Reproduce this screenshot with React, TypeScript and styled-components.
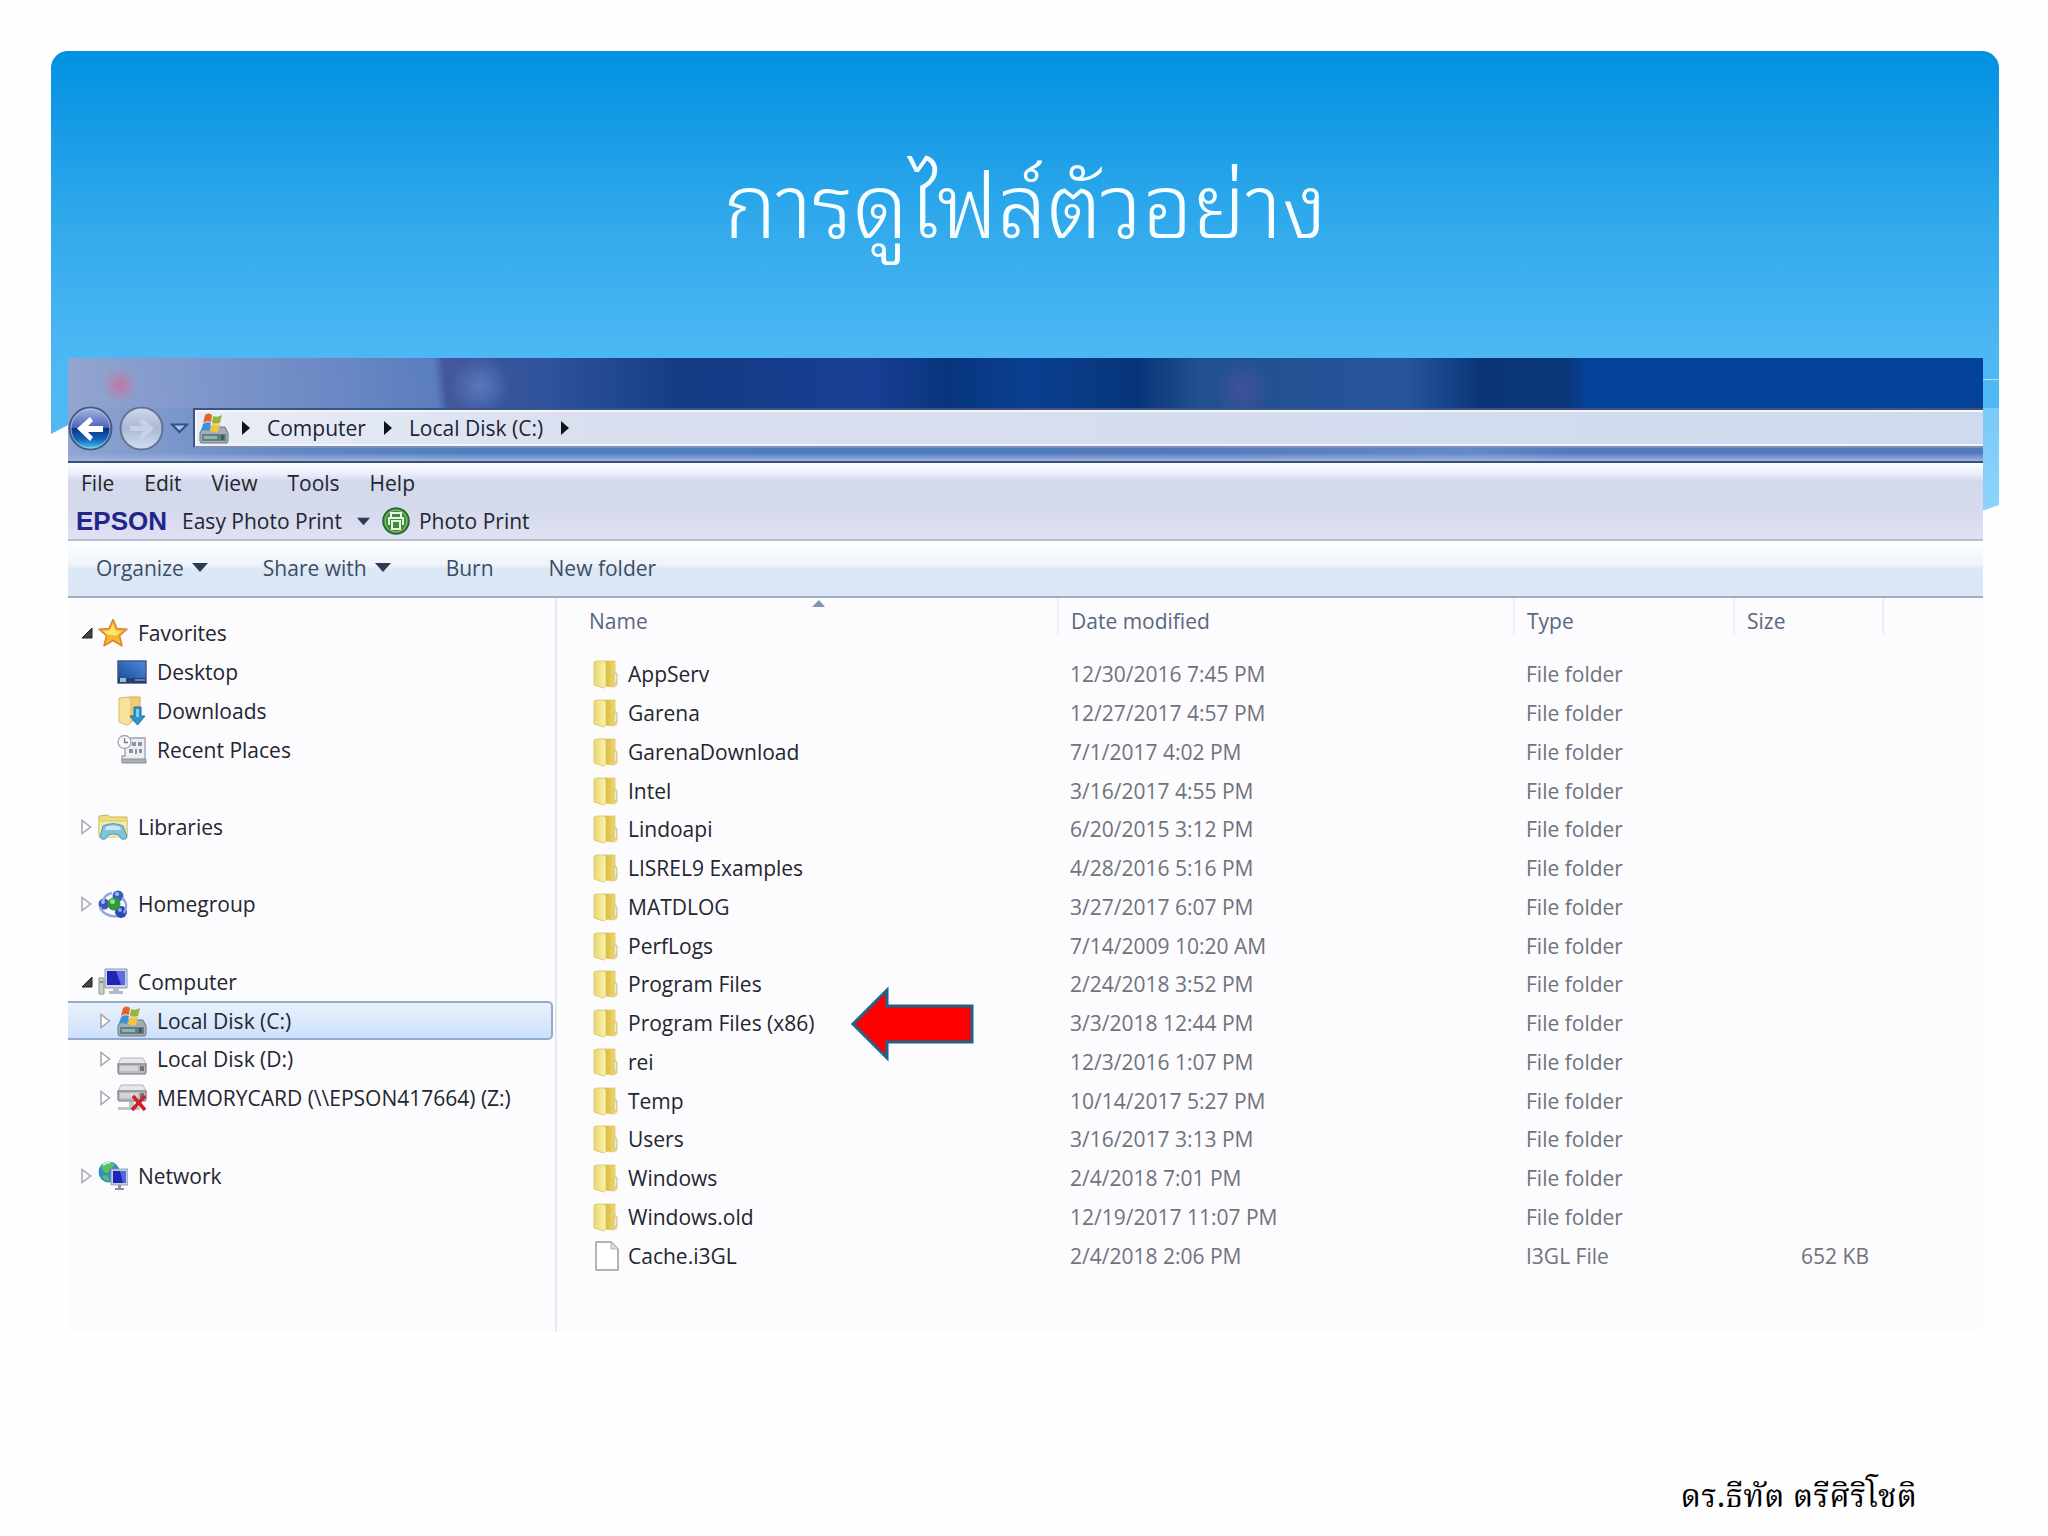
import React from "react";
import styled, { createGlobalStyle, css } from "styled-components";

const UI = `"Open Sans", "Noto Sans", sans-serif`;

const Page = createGlobalStyle`
  *, *::before, *::after { box-sizing: border-box; }
  body { margin: 0; background: #fefefe; }
  button { border: 0; padding: 0; margin: 0; background: none; font: inherit; color: inherit; cursor: pointer; }
  a { color: inherit; text-decoration: none; }
  ul, ol { list-style: none; margin: 0; padding: 0; }
  svg { display: block; flex: none; }
`;

/* ---------- slide ---------- */

const Slide = styled.main`
  display: grid;
  grid-template-columns: minmax(0, 1fr);
  grid-template-rows: 307px auto auto;
  align-content: start;
  min-height: 100vh;
  padding: 51px 49px 0 51px;
  font: 21px/28px ${UI};
  color: #23262e;
`;

const Backdrop = styled.div`
  grid-area: 1 / 1 / 3 / 2;
  z-index: 0;
  height: 460px;
  border-radius: 17px 17px 0 0;
  background:
    linear-gradient(#7ac9f8, #8dd4fc) right 357px / 18px 103px no-repeat,
    linear-gradient(#b4e2fb, #b4e2fb) right 328px / 17px 1px no-repeat,
    linear-gradient(#0092e2, #189be6 80px, #2ea8eb 160px, #4db7f3 300px, #54bbf5);
  clip-path: polygon(0 0, 100% 0, 100% 454px, calc(100% - 17px) 460px, 17px 374px, 0 383px);
`;

const Title = styled.h1`
  grid-area: 1 / 1;
  z-index: 1;
  align-self: center;
  justify-self: center;
  margin: 0;
  padding-bottom: 14px;
  font: 300 89px/120px "Noto Sans Thai Looped", "Noto Looped Thai", "Loma", "Garuda", "Waree", "Noto Sans Thai", sans-serif;
  color: #f7feff;
`;

const Footer = styled.footer`
  justify-self: end;
  padding: 139px 82px 0 0;
  font: 32px/56px "Norasi", "Noto Serif Thai", "Kinnari", serif;
  color: #000;
`;

/* ---------- explorer window ---------- */

const Window = styled.section`
  grid-area: 2 / 1;
  z-index: 1;
  margin: 0 16px 0 17px;
  background: #fcfbfe;
`;

const Glass = styled.header`
  height: 105px;
  padding-top: 50px;
  border-bottom: 2px solid #3b4f78;
  background:
    radial-gradient(circle at 52px 27px, rgba(205, 110, 150, 0.75), rgba(205, 110, 150, 0) 18px) no-repeat,
    radial-gradient(circle at 412px 28px, rgba(95, 130, 195, 0.8), rgba(95, 130, 195, 0) 30px) 0 0 / 100% 50px no-repeat,
    radial-gradient(circle at 1174px 32px, rgba(80, 80, 160, 0.7), rgba(80, 80, 160, 0) 30px) 0 0 / 100% 50px no-repeat,
    linear-gradient(84deg, #93a5d0 0, #7590c8 200px, #5a7dbf 368px, rgba(90, 125, 191, 0) 378px) 0 0 / 500px 50px no-repeat,
    linear-gradient(rgba(0, 0, 0, 0) 95px, #9fb4dc 103px) no-repeat,
    linear-gradient(90deg, #8fa5d2 0, #6487c4 220px, #4f7ec0 400px, #5079bd 1100px, #6289cc 1400px, #5479bf 1500px) 0 50px / 100% 60px no-repeat,
    linear-gradient(90deg, #46589c 370px, #2e539c 480px, #143a84 620px, #193f94 800px, #07357d 880px, #0a3f90 960px, #07357a 1070px, #21508f 1130px, #26559c 1340px, #0a3679 1410px, #0a377a 1500px, #05429a 1520px);
`;

const AddressBar = styled.div`
  display: flex;
  align-items: center;
  height: 40px;
`;

const NavButton = styled.button`
  width: 45px;
  height: 45px;
  margin-right: 6px;
`;

const HistoryButton = styled.button`
  width: 19px;
  margin-right: 4px;
`;

const Crumbs = styled.nav`
  display: flex;
  flex: 1;
  align-items: center;
  height: 40px;
  padding-left: 4px;
  border: solid #3d5480;
  border-width: 2px 0 2px 2px;
  border-bottom-color: #7e90b9;
  background: linear-gradient(90deg, #e8edf6 0, #dadff0 400px, #d0daee);
  box-shadow: inset 2px 2px 0 #f1f7fc, inset 0 -2px 0 #eef4fb;
  color: #1d2333;
`;

const Crumb = styled.a<{ $first?: boolean }>`
  margin: 0 18px 0 17px;
`;

const Menus = styled.div`
  height: 78px;
  padding: 4px 8px 0;
  border-bottom: 2px solid #b8bccd;
  background: linear-gradient(#fbfeff 0, #e9ebfa 12px, #d3d9eb 18px, #d5daec 50px, #e0e1f4);
`;

const MenuRow = styled.nav`
  display: flex;
  align-items: center;
  gap: 30px;
  height: 31px;
  padding-left: 5px;
`;

const PluginRow = styled.div`
  display: flex;
  align-items: center;
  height: 46px;
`;

const Brand = styled.strong`
  margin-right: 15px;
  font: bold 26px/28px "Liberation Sans", Arial, sans-serif;
  color: #24258a;
`;

const PluginButton = styled.button<{ $gap: number }>`
  display: flex;
  align-items: center;
  gap: ${(p) => p.$gap}px;
  margin-right: 12px;
`;

const Toolbar = styled.div`
  display: flex;
  align-items: center;
  gap: 55px;
  height: 57px;
  padding: 0 0 2px 28px;
  border-bottom: 2px solid #a2aebf;
  background: linear-gradient(#fdffff 0, #eef3fc 24px, #dce8f6 28px, #dbe6f6);
  color: #3d4c66;
`;

const ToolButton = styled.button`
  display: flex;
  align-items: center;
  gap: 8px;
`;

const Body = styled.div`
  display: flex;
  min-height: 734px;
`;

/* ---------- navigation tree ---------- */

const Sidebar = styled.nav`
  flex: none;
  width: 489px;
  padding-top: 16px;
  border-right: 2px solid #e4eaf0;
`;

const Tree = styled.ul`
  display: grid;
  grid-template-rows: repeat(15, 1fr);
  height: 581px;
`;

const TreeItem = styled.li<{ $row: number; $level: number; $selected?: boolean }>`
  display: flex;
  align-items: center;
  grid-row: ${(p) => p.$row};
  margin-right: 2px;
  padding-left: ${(p) => (p.$level ? 32 : 13)}px;
  border: 2px solid transparent;
  border-left: 0;
  ${(p) =>
    p.$selected &&
    css`
      border-color: #94abcb;
      border-radius: 0 5px 5px 0;
      background: linear-gradient(#e9f2fc, #cde0fb);
    `}
`;

const Toggle = styled.span`
  width: 17px;
`;

const TreeLink = styled.a`
  display: flex;
  align-items: center;
  gap: 10px;
  white-space: nowrap;
`;

/* ---------- file list ---------- */

const Files = styled.table`
  flex: 1;
  align-self: flex-start;
  table-layout: fixed;
  border-collapse: separate;
  border-spacing: 0;
  height: 677px;
  color: #70737c;
`;

const Head = styled.th<{ $first?: boolean }>`
  position: relative;
  height: 57px;
  padding: 10px 0 21px ${(p) => (p.$first ? 32 : 12)}px;
  background: linear-gradient(#e9eef4, #e9eef4) right top / 2px 36px no-repeat;
  font-weight: 400;
  line-height: 26px;
  text-align: left;
  color: #5a6780;
`;

const SortMark = styled.span`
  position: absolute;
  top: 1px;
  left: 255px;
`;

const Cell = styled.td<{ $right?: boolean }>`
  padding: 0 ${(p) => (p.$right ? 15 : 0)}px 0 11px;
  text-align: ${(p) => (p.$right ? "right" : "left")};
  white-space: nowrap;
`;

const NameCell = styled.td`
  position: relative;
  padding: 0 0 0 36px;
  color: #23262e;
`;

const FileLink = styled.a`
  display: flex;
  align-items: center;
  gap: 5px;
`;

const Pointer = styled.svg`
  position: absolute;
  left: 292px;
  top: 50%;
  margin-top: -37px;
`;

/* ---------- drawings ---------- */

const Down = ({ w = 16 }: { w?: number }) => (
  <svg width={w} height="9" viewBox="0 0 16 9"><path d="M0 0h16L8 9z" fill="#2f3b52" /></svg>
);

const Right = () => (
  <svg width="8" height="14" viewBox="0 0 8 14"><path d="M0 0l8 7-8 7z" fill="#10131c" /></svg>
);

const Opened = () => (
  <svg width="12" height="12" viewBox="0 0 12 12"><path d="M11 1v10H1z" fill="#444" stroke="#222" /></svg>
);

const Closed = () => (
  <svg width="11" height="16" viewBox="0 0 11 16"><path d="M1 1.500v13L9.500 8z" fill="#fff" stroke="#a3a5aa" strokeWidth="1.500" /></svg>
);

const Back = () => (
  <svg width="45" height="45" viewBox="0 0 45 45">
    <defs>
      <linearGradient id="back" x1="0" y1="0" x2="0" y2="1">
        <stop offset="0" stopColor="#a9b8e6" /><stop offset=".48" stopColor="#4a65b5" />
        <stop offset=".5" stopColor="#0b3385" /><stop offset=".75" stopColor="#1063b8" /><stop offset="1" stopColor="#4ed0f5" />
      </linearGradient>
    </defs>
    <circle cx="22.500" cy="22.500" r="21" fill="url(#back)" stroke="#475a86" strokeWidth="2" />
    <circle cx="22.500" cy="22.500" r="19.500" fill="none" stroke="#c4d2ef" strokeOpacity=".7" />
    <path d="M9 22.500L22 11l3 4-5 5h15v6H20l5 5-3 4z" fill="#fff" />
  </svg>
);

const Forward = () => (
  <svg width="45" height="45" viewBox="0 0 45 45">
    <defs>
      <linearGradient id="fwd" x1="0" y1="0" x2="0" y2="1">
        <stop offset="0" stopColor="#cfd8ea" /><stop offset=".5" stopColor="#aab9d6" /><stop offset="1" stopColor="#d3dff0" />
      </linearGradient>
    </defs>
    <circle cx="22.500" cy="22.500" r="21" fill="url(#fwd)" stroke="#66738f" strokeWidth="2" />
    <path d="M35 22.500L23 12l-3 4 5 4H11v5h14l-5 5 3 4z" fill="#c6d1e5" />
  </svg>
);

const Folder = () => (
  <svg width="30" height="30" viewBox="0 0 30 30">
    <defs>
      <linearGradient id="fa" x1="0" x2="1"><stop offset="0" stopColor="#e8d873" /><stop offset="1" stopColor="#fbf2ae" /></linearGradient>
      <linearGradient id="fb" x1="0" x2="1"><stop offset="0" stopColor="#d9b32f" /><stop offset="1" stopColor="#f3df83" /></linearGradient>
    </defs>
    <path d="M11 2h11v10l2 3v11l-3 2-10-1z" fill="url(#fb)" stroke="#dcc873" strokeWidth=".8" />
    <path d="M21 14c3 0 3 3 3 6l-1 5h-2z" fill="#e4ecd4" stroke="#c9b559" strokeWidth=".6" />
    <path d="M1 3l3-1h7c2 1 2 2 2 4v20c0 2-1 3-3 3l-9-3z" fill="url(#fa)" stroke="#d9c565" strokeWidth=".8" />
  </svg>
);

const FileIcon = () => (
  <svg width="30" height="30" viewBox="0 0 30 30">
    <path d="M3 1h15l7 7v21H3z" fill="#fff" stroke="#9b9ca2" strokeWidth="1.500" />
    <path d="M18 1v7h7z" fill="#d9dadd" stroke="#b4b5ba" />
  </svg>
);

const Drive = ({ y = 0 }: { y?: number }) => (
  <g transform={`translate(0 ${y})`}>
    <path d="M4 12h22l3 6H1z" fill="#e6e7e9" stroke="#a5a7ab" strokeWidth=".8" />
    <path d="M1 18h28v8l-1 2H2l-1-2z" fill="#b9bbbf" stroke="#77797e" strokeWidth="1.200" />
    <path d="M3 20h18v5H3z" fill="#d4d5d8" />
    <path d="M23 20h4v5h-4z" fill="#73757a" />
  </g>
);

const SystemDrive = () => (
  <svg width="30" height="32" viewBox="0 0 30 32">
    <path d="M4 15h22l3 6v8l-1 2H2l-1-2v-8z" fill="#a3adb5" stroke="#6d7880" />
    <path d="M3 22h24v7H3z" fill="#5f7f86" />
    <path d="M5 24h13v3H5z" fill="#8fb5ad" /><path d="M22 23h3v5h-3z" fill="#4a5560" />
    <path d="M6 3c3-2 5-2 7 0l-1 7c-3-1-5-1-8 1z" fill="#e2632f" />
    <path d="M14 4c3 1 5 1 9-1l-2 8c-3 1-6 1-8 0z" fill="#93b73a" />
    <path d="M4 12c3-2 5-2 8-1l-2 8c-3-1-5-1-8 0z" fill="#3f8fd6" />
    <path d="M13 12c3 1 5 1 8 0l-2 8c-3 1-5 0-8-1z" fill="#f3c63c" />
  </svg>
);

const icons: Record<string, React.ReactNode> = {
  star: (
    <svg width="30" height="30" viewBox="0 0 30 30">
      <path d="M15 1.500l4 9 10 .8-7.500 6.500 2.500 10L15 22.500 6 27.800l2.500-10L1 11.300l10-.8z" fill="#f8b62c" stroke="#dc8232" strokeWidth="1.500" strokeLinejoin="round" />
      <path d="M15 6l2.500 7 6 .5-5 4-9-1-4-3.500 6-.5z" fill="#ffe56b" />
    </svg>
  ),
  desktop: (
    <svg width="30" height="30" viewBox="0 0 30 30">
      <defs><linearGradient id="dk" x1="0" y1="1" x2="1" y2="0"><stop offset="0" stopColor="#1c4397" /><stop offset="1" stopColor="#4f8bdc" /></linearGradient></defs>
      <path d="M1 4h28v22H1z" fill="url(#dk)" stroke="#425a86" strokeWidth="1.500" />
      <path d="M1 21h28v5H1z" fill="#25406f" /><path d="M3 21h6v4H3z" fill="#90c5c0" /><path d="M18 22h10v2H18z" fill="#6884ad" />
    </svg>
  ),
  downloads: (
    <svg width="30" height="32" viewBox="0 0 30 32">
      <path d="M12 2h11v24H12z" fill="#efcf76" stroke="#d2ab51" />
      <path d="M2 3l10-1 2 3v23l-4 2-8-3z" fill="#f8e39b" stroke="#d8b964" />
      <path d="M17 12h7v9h4l-7.500 9L13 21h4z" fill="#2c94cf" stroke="#206fa5" /><path d="M19 14h3v8h-3z" fill="#7dd0ef" />
    </svg>
  ),
  recent: (
    <svg width="30" height="32" viewBox="0 0 30 32">
      <path d="M8 4h20v22H5v-4h3z" fill="#eceef2" stroke="#9da1ab" strokeWidth="1.300" />
      <path d="M5 25h24v4H5z" fill="#a9aeb9" stroke="#8c909b" />
      <path d="M15 8h4v4h-4zM21 8h4v4h-4zM12 15h4v4h-4zM18 15h2v5h-2zM22 15h3v4h-3z" fill="#8b93a3" />
      <circle cx="7.500" cy="8" r="6.500" fill="#f7f8fa" stroke="#a3a7b1" strokeWidth="1.300" />
      <path d="M7.500 4v4.500H11" fill="none" stroke="#747a86" strokeWidth="1.300" />
    </svg>
  ),
  libraries: (
    <svg width="30" height="30" viewBox="0 0 30 30">
      <path d="M1 4l9-1 2 2h17v18H1z" fill="#f1dd81" stroke="#cdb65c" />
      <path d="M1 9h28v16H1z" fill="#f7eba6" stroke="#d4c06c" strokeWidth=".8" />
      <path d="M5 14c6-3 14-3 20 0l4 11c-1 3-6 3-7 0 0-4-13-4-13 0-1 3-6 3-7 0z" fill="#7fc3dd" stroke="#4a93ad" />
      <path d="M8 15c5-2 9-2 14 0l1 3H7z" fill="#c8e9f3" />
    </svg>
  ),
  homegroup: (
    <svg width="30" height="30" viewBox="0 0 30 30">
      <circle cx="20" cy="7" r="5.500" fill="#3b5cc4" /><circle cx="6" cy="15" r="5.500" fill="#3b57bb" /><circle cx="23" cy="23" r="6" fill="#2a49b5" />
      <path d="M24 9c5 4 5 10 2 15M2 18c2 6 9 10 17 9M14 4C9 5 6 8 5 12" fill="none" stroke="#91a9dc" strokeWidth="2.500" />
      <circle cx="16" cy="15" r="6.500" fill="#2b9b3a" /><circle cx="14.500" cy="12.500" r="2.500" fill="#8fe080" />
      <circle cx="19" cy="5" r="2" fill="#a2b9f1" /><circle cx="5" cy="13" r="2" fill="#a2b9f1" /><circle cx="22" cy="21" r="2" fill="#8ba8ee" />
    </svg>
  ),
  computer: (
    <svg width="30" height="30" viewBox="0 0 30 30">
      <path d="M1 11h5v16H1z" fill="#c9cfc0" stroke="#8f958c" /><path d="M2 14h3v2H2z" fill="#69a060" />
      <path d="M7 2h22v19H7z" fill="#cdd4e6" stroke="#8e99b5" /><path d="M9 4h18v14H9z" fill="#2124b4" /><path d="M18 4h9v14h-4z" fill="#5c6ce0" />
      <path d="M15 21h6v3h4v3H11v-3h4z" fill="#b4bac8" />
    </svg>
  ),
  system: <SystemDrive />,
  drive: <svg width="30" height="32" viewBox="0 0 30 32"><Drive y={3} /></svg>,
  missing: (
    <svg width="30" height="30" viewBox="0 0 30 30">
      <Drive y={-10} />
      <path d="M12 19h5v5h-5zM1 24h22v3H1z" fill="#bfc6c1" />
      <path d="M16 13l12 14M28 13L15 27" stroke="#c9202c" strokeWidth="3.500" />
    </svg>
  ),
  network: (
    <svg width="30" height="32" viewBox="0 0 30 32">
      <circle cx="11" cy="12" r="10.500" fill="#2f8fc0" /><path d="M3 7c4-6 9-5 14-3-1 4-5 3-6 7s-5 3-8-4zM4 16l5-1 3 6c-4 0-7-2-8-5z" fill="#5cc060" /><path d="M5 5c3-3 6-3 8-3" stroke="#c2eef2" strokeWidth="2" fill="none" />
      <path d="M13 9h17v16H13z" fill="#c4cce0" stroke="#8a94b0" strokeWidth=".8" /><path d="M15 11h13v12H15z" fill="#1f27b8" /><path d="M22 11h6v12h-3z" fill="#5566de" />
      <path d="M20 25h3v3h3v2h-9v-2h3z" fill="#8991a3" />
    </svg>
  ),
};

const PrintIcon = () => (
  <svg width="28" height="28" viewBox="0 0 28 28">
    <circle cx="14" cy="14" r="13" fill="#3f8a3d" stroke="#2b6330" strokeWidth="1.500" />
    <circle cx="14" cy="14" r="11" fill="none" stroke="#93c886" strokeWidth="1" />
    <path d="M9 10V6h10v4M7 18v-7h14v7M10 14h8v8h-8z" fill="none" stroke="#e5f5df" strokeWidth="2" />
  </svg>
);

/* ---------- data ---------- */

type Node = { row: number; level: number; icon: string; label: string; open?: boolean; leaf?: boolean; selected?: boolean };

const tree: Node[] = [
  { row: 1, level: 0, icon: "star", label: "Favorites", open: true },
  { row: 2, level: 1, icon: "desktop", label: "Desktop", leaf: true },
  { row: 3, level: 1, icon: "downloads", label: "Downloads", leaf: true },
  { row: 4, level: 1, icon: "recent", label: "Recent Places", leaf: true },
  { row: 6, level: 0, icon: "libraries", label: "Libraries" },
  { row: 8, level: 0, icon: "homegroup", label: "Homegroup" },
  { row: 10, level: 0, icon: "computer", label: "Computer", open: true },
  { row: 11, level: 1, icon: "system", label: "Local Disk (C:)", selected: true },
  { row: 12, level: 1, icon: "drive", label: "Local Disk (D:)" },
  { row: 13, level: 1, icon: "missing", label: "MEMORYCARD (\\\\EPSON417664) (Z:)" },
  { row: 15, level: 0, icon: "network", label: "Network" },
];

const files: [string, string, string?, string?][] = [
  ["AppServ", "12/30/2016 7:45 PM"],
  ["Garena", "12/27/2017 4:57 PM"],
  ["GarenaDownload", "7/1/2017 4:02 PM"],
  ["Intel", "3/16/2017 4:55 PM"],
  ["Lindoapi", "6/20/2015 3:12 PM"],
  ["LISREL9 Examples", "4/28/2016 5:16 PM"],
  ["MATDLOG", "3/27/2017 6:07 PM"],
  ["PerfLogs", "7/14/2009 10:20 AM"],
  ["Program Files", "2/24/2018 3:52 PM"],
  ["Program Files (x86)", "3/3/2018 12:44 PM"],
  ["rei", "12/3/2016 1:07 PM"],
  ["Temp", "10/14/2017 5:27 PM"],
  ["Users", "3/16/2017 3:13 PM"],
  ["Windows", "2/4/2018 7:01 PM"],
  ["Windows.old", "12/19/2017 11:07 PM"],
  ["Cache.i3GL", "2/4/2018 2:06 PM", "I3GL File", "652 KB"],
];

export default function App() {
  return (
    <>
      <Page />
      <Slide>
        <Backdrop />
        <Title lang="th">การดูไฟล์ตัวอย่าง</Title>
        <Window>
          <Glass>
            <AddressBar>
              <NavButton aria-label="Back"><Back /></NavButton>
              <NavButton aria-label="Forward"><Forward /></NavButton>
              <HistoryButton aria-label="Recent pages">
                <svg width="19" height="11" viewBox="0 0 19 11"><path d="M2 1.500h15L9.500 9z" fill="#a9c3e6" stroke="#2c5288" strokeWidth="2" /></svg>
              </HistoryButton>
              <Crumbs>
                <SystemDrive />
                <svg width="13" height="1" />
                <Right />
                <Crumb href="#computer">Computer</Crumb>
                <Right />
                <Crumb href="#c">Local Disk (C:)</Crumb>
                <Right />
              </Crumbs>
            </AddressBar>
          </Glass>
          <Menus>
            <MenuRow>
              {["File", "Edit", "View", "Tools", "Help"].map((m) => <button key={m}>{m}</button>)}
            </MenuRow>
            <PluginRow>
              <Brand>EPSON</Brand>
              <PluginButton $gap={15}>Easy Photo Print <Down w={13} /></PluginButton>
              <PluginButton $gap={9}><PrintIcon /> Photo Print</PluginButton>
            </PluginRow>
          </Menus>
          <Toolbar>
            <ToolButton>Organize <Down /></ToolButton>
            <ToolButton>Share with <Down /></ToolButton>
            <ToolButton>Burn</ToolButton>
            <ToolButton>New folder</ToolButton>
          </Toolbar>
          <Body>
            <Sidebar>
              <Tree>
                {tree.map((n) => (
                  <TreeItem key={n.label} $row={n.row} $level={n.level} $selected={n.selected}>
                    <Toggle>{n.leaf ? null : n.open ? <Opened /> : <Closed />}</Toggle>
                    <TreeLink href="#folder">{icons[n.icon]}{n.label}</TreeLink>
                  </TreeItem>
                ))}
              </Tree>
            </Sidebar>
            <Files>
              <colgroup>
                <col style={{ width: 502 }} />
                <col style={{ width: 456 }} />
                <col style={{ width: 220 }} />
                <col style={{ width: 149 }} />
                <col />
              </colgroup>
              <thead>
                <tr>
                  <Head $first>
                    Name
                    <SortMark><svg width="13" height="8" viewBox="0 0 13 8"><path d="M0 8l7-7 6 7z" fill="#8296a8" /></svg></SortMark>
                  </Head>
                  <Head>Date modified</Head>
                  <Head>Type</Head>
                  <Head>Size</Head>
                  <td />
                </tr>
              </thead>
              <tbody>
                {files.map(([name, date, type = "File folder", size]) => (
                  <tr key={name}>
                    <NameCell>
                      <FileLink href="#file">{size ? <FileIcon /> : <Folder />}{name}</FileLink>
                      {name === "Program Files (x86)" && (
                        <Pointer width="128" height="76" viewBox="0 0 128 76">
                          <path d="M4 38L38 4v16h85v36H38v16z" fill="#fe0000" stroke="#1c6488" strokeWidth="3" />
                        </Pointer>
                      )}
                    </NameCell>
                    <Cell>{date}</Cell>
                    <Cell>{type}</Cell>
                    <Cell $right>{size}</Cell>
                    <td />
                  </tr>
                ))}
              </tbody>
            </Files>
          </Body>
        </Window>
        <Footer lang="th">ดร.ธีทัต ตรีศิริโชติ</Footer>
      </Slide>
    </>
  );
}
